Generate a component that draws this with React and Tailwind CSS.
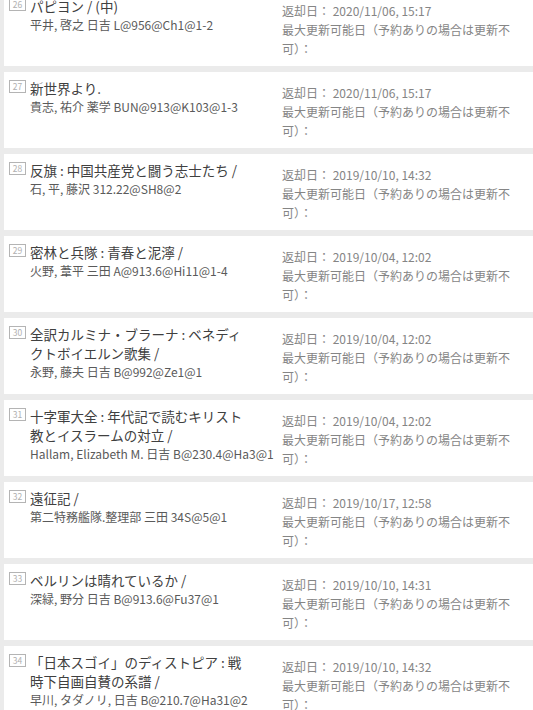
import React from "react";

const items = [
  { n: 26, title: "パピヨン / (中)", author: "平井, 啓之 日吉 L@956@Ch1@1-2", date: "2020/11/06, 15:17" },
  { n: 27, title: "新世界より.", author: "貴志, 祐介 薬学 BUN@913@K103@1-3", date: "2020/11/06, 15:17" },
  { n: 28, title: "反旗 : 中国共産党と闘う志士たち /", author: "石, 平, 藤沢 312.22@SH8@2", date: "2019/10/10, 14:32" },
  { n: 29, title: "密林と兵隊 : 青春と泥濘 /", author: "火野, 葦平 三田 A@913.6@Hi11@1-4", date: "2019/10/04, 12:02" },
  { n: 30, title: "全訳カルミナ・ブラーナ : ベネディクトボイエルン歌集 /", author: "永野, 藤夫 日吉 B@992@Ze1@1", date: "2019/10/04, 12:02" },
  { n: 31, title: "十字軍大全 : 年代記で読むキリスト教とイスラームの対立 /", author: "Hallam, Elizabeth M. 日吉 B@230.4@Ha3@1", date: "2019/10/04, 12:02" },
  { n: 32, title: "遠征記 /", author: "第二特務艦隊.整理部 三田 34S@5@1", date: "2019/10/17, 12:58" },
  { n: 33, title: "ベルリンは晴れているか /", author: "深緑, 野分 日吉 B@913.6@Fu37@1", date: "2019/10/10, 14:31" },
  { n: 34, title: "「日本スゴイ」のディストピア : 戦時下自画自賛の系譜 /", author: "早川, タダノリ, 日吉 B@210.7@Ha31@2", date: "2019/10/10, 14:32" },
];

function Card({ item }) {
  return (
    <div className="flex bg-white">
      <div className="w-[278px] pl-[5px] pt-[7px] flex items-start gap-[4px]">
        <div className="mt-[1px] w-[17px] h-[13px] border border-[#b4b4b4] flex items-center justify-center text-[8.5px] leading-none text-[#b0b0b0] shrink-0">
          {item.n}
        </div>
        <div className="w-[220px]">
          <div className="text-[13.5px] leading-[19px] text-[#404040]">{item.title}</div>
          <div className="text-[12px] leading-[17px] text-[#5a5a5a] whitespace-nowrap">{item.author}</div>
        </div>
      </div>
      <div className="w-[234px] pt-[11px] pb-[8px] text-[12px] leading-[19px] text-[#858585]">
        <div className="whitespace-nowrap">返却日： {item.date}</div>
        <div>最大更新可能日（予約ありの場合は更新不可）：</div>
      </div>
    </div>
  );
}

export default function App() {
  return (
    <div className="h-[710px] w-[533px] overflow-hidden bg-[#ebebeb] font-['Noto_Sans_CJK_JP','Open_Sans',sans-serif]">
      <div className="-mt-[10px] pl-[4px] flex flex-col gap-[6px]">
        {items.map((it) => (
          <Card key={it.n} item={it} />
        ))}
      </div>
    </div>
  );
}
